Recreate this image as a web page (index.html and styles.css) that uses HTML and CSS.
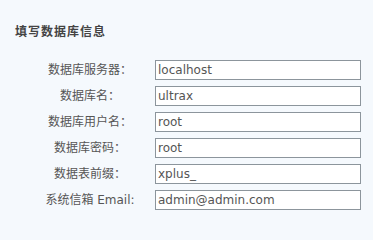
FILE: index.html
```html
<!DOCTYPE html>
<html lang="zh-CN">
<head>
<meta charset="utf-8">
<title>填写数据库信息</title>
<link rel="stylesheet" href="styles.css">
</head>
<body>
<div class="page">
  <h3 class="title">填写数据库信息</h3>
  <div class="form">
    <label class="lbl">数据库服务器：</label>
    <input class="field" type="text" value="localhost">
    <label class="lbl">数据库名：</label>
    <input class="field" type="text" value="ultrax">
    <label class="lbl">数据库用户名：</label>
    <input class="field" type="text" value="root">
    <label class="lbl">数据库密码：</label>
    <input class="field" type="text" value="root">
    <label class="lbl">数据表前缀：</label>
    <input class="field" type="text" value="xplus_">
    <label class="lbl">系统信箱 Email:</label>
    <input class="field" type="text" value="admin@admin.com">
  </div>
</div>
</body>
</html>
```
FILE: styles.css
```css
html, body {
  margin: 0;
  padding: 0;
  background: #f5f9fd;
}
body {
  font-family: "DejaVu Sans", "Noto Sans CJK SC", sans-serif;
  font-size: 12px;
  color: #555;
}
.page {
  padding-top: 21px;
}
.title {
  margin: 0 0 16px 0;
  padding-left: 15px;
  font-size: 12px;
  line-height: 20px;
  font-weight: bold;
  letter-spacing: 1px;
  color: #444;
  font-family: "Noto Sans CJK SC", sans-serif;
}
.form {
  display: grid;
  grid-template-columns: 120px 206px;
  column-gap: 5px;
  row-gap: 6px;
  margin-left: 30px;
  padding-top: 3px;
}
.lbl {
  text-align: center;
  line-height: 20px;
  height: 20px;
  color: #555;
}
.field {
  box-sizing: border-box;
  height: 20px;
  width: 206px;
  margin: 0;
  border: 1px solid #8c959c;
  background: #fff;
  padding: 0 2px;
  font-family: "DejaVu Sans", sans-serif;
  font-size: 12px;
  color: #555;
  outline: none;
}
```
